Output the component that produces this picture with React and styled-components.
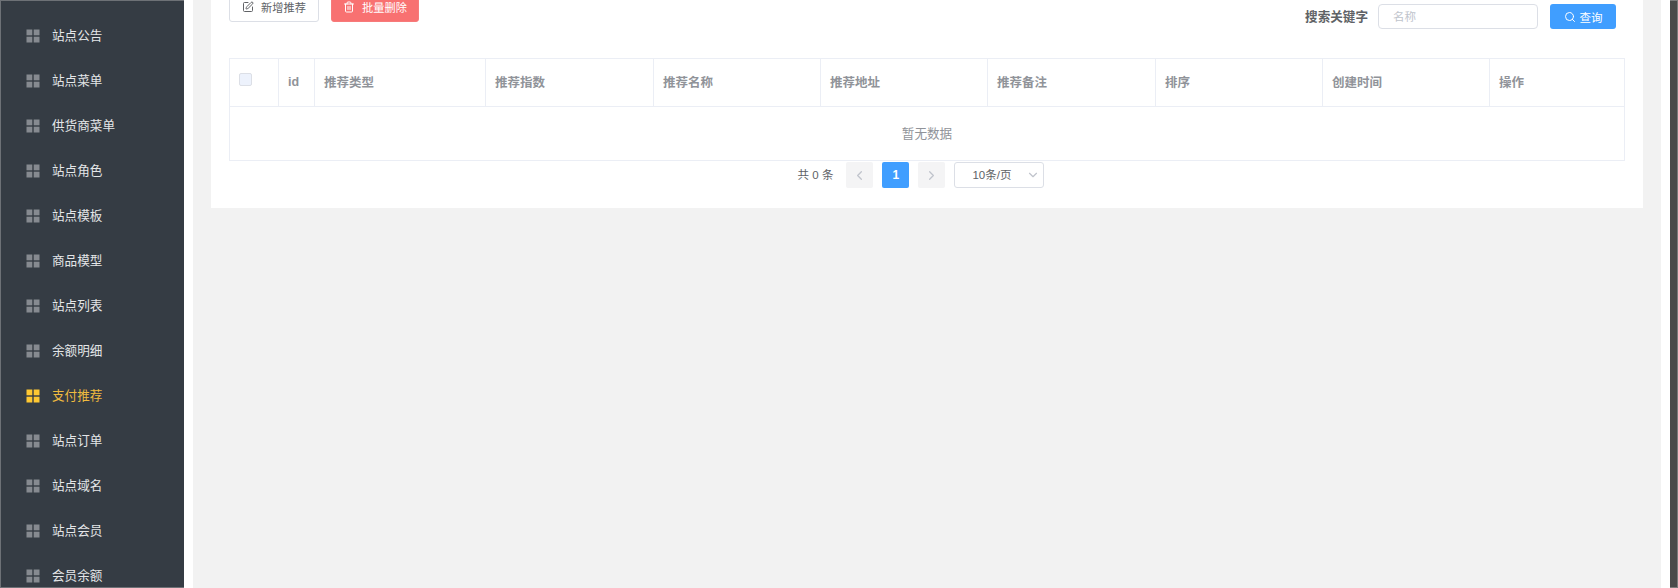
import React from "react";
import styled, { createGlobalStyle } from "styled-components";
import { SquarePen, Trash2, Search, ChevronLeft, ChevronRight, ChevronDown } from "lucide-react";

const Global = createGlobalStyle`
  html, body { margin: 0; padding: 0; height: 100%; overflow: hidden; background: #fff; }
  body { font-family: "Liberation Sans", "Noto Sans CJK SC", sans-serif; font-size: 13px; }
  * { box-sizing: border-box; }
`;

const Shell = styled.div`
  display: flex;
  width: 1678px;
  height: 588px;
  overflow: hidden;
`;

const Sidebar = styled.nav`
  flex: 0 0 184px;
  height: 588px;
  background: #353c44;
  border: 1px solid #6d7176;
  border-right: 0;
  padding-top: 12px;
  overflow: hidden;
`;

const MenuItem = styled.div`
  display: flex;
  align-items: center;
  height: 45px;
  padding-left: 25px;
  gap: 12px;
  font-size: 12.6px;
  color: ${(p) => (p.$active ? "#efbb3f" : "#e4e6e8")};
`;

const MenuLabel = styled.span`
  margin-top: -2px;
`;

const GridGlyph = styled.svg`
  width: 14px;
  height: 14px;
  flex: none;
  fill: ${(p) => (p.$active ? "#ffc832" : "#868a90")};
`;

const Main = styled.main`
  flex: 1;
  min-width: 0;
  background: #fff;
  padding: 0 9px;
`;

const Backdrop = styled.div`
  height: 100%;
  background: #f2f2f2;
  padding: 0 18px;
  overflow: hidden;
`;

const Card = styled.section`
  margin-top: -8px;
  background: #fff;
  padding: 0 18px 20px;
  position: relative;
`;

const Toolbar = styled.div`
  display: flex;
  justify-content: space-between;
  align-items: flex-start;
  height: 66px;
  padding-right: 9px;
`;

const ButtonGroup = styled.div`
  display: flex;
  gap: 12px;
`;

const Button = styled.button`
  display: inline-flex;
  align-items: center;
  justify-content: center;
  gap: 7px;
  width: ${(p) => p.$w}px;
  height: 30px;
  padding: 0;
  border-radius: 3px;
  border: 1px solid ${(p) => (p.$danger ? "#f77a7a" : "#dcdfe6")};
  background: ${(p) => (p.$danger ? "#f87171" : "#fff")};
  color: ${(p) => (p.$danger ? "#fff" : "#606266")};
  font: inherit;
  font-size: 11.2px;
`;

const SearchGroup = styled.div`
  display: flex;
  align-items: center;
  margin-top: 12px;
  height: 25px;
`;

const SearchLabel = styled.label`
  font-size: 12.6px;
  font-weight: 700;
  color: #606266;
  margin-right: 10px;
  margin-top: -2px;
`;

const SearchInput = styled.input`
  width: 160px;
  height: 25px;
  border: 1px solid #dcdfe6;
  border-radius: 4px;
  padding: 0 14px;
  font: inherit;
  font-size: 11.5px;
  margin-right: 12px;
  outline: none;
  &::placeholder { color: #c0c4cc; opacity: 1; }
`;

const QueryButton = styled.button`
  display: inline-flex;
  align-items: center;
  justify-content: center;
  gap: 4px;
  width: 66px;
  height: 25px;
  padding: 0;
  border: 0;
  border-radius: 3px;
  background: #409eff;
  color: #fff;
  font: inherit;
  font-size: 11.5px;
`;

const Table = styled.table`
  width: 1395px;
  border-collapse: collapse;
  table-layout: fixed;
  border: 1px solid #ebeef5;
`;

const Th = styled.th`
  height: 48px;
  padding: 0 9px 2px;
  text-align: left;
  font-size: 12.5px;
  font-weight: 700;
  color: #909399;
  border: 1px solid #ebeef5;
`;

const EmptyCell = styled.td`
  height: 54px;
  padding-bottom: 4px;
  text-align: center;
  font-size: 12.6px;
  color: #909399;
  border: 1px solid #ebeef5;
`;

const Check = styled.span`
  display: block;
  width: 13px;
  height: 13px;
  margin-top: -4px;
  background: #edf2fc;
  border: 1px solid #dcdfe6;
  border-radius: 2px;
`;

const Pagination = styled.div`
  display: flex;
  align-items: center;
  justify-content: center;
  height: 26px;
  margin-top: 1px;
  padding-right: 12px;
  font-size: 11.5px;
  color: #606266;
`;

const Total = styled.span`
  margin-right: 13px;
  margin-top: -3px;
`;

const PageBox = styled.span`
  display: inline-flex;
  align-items: center;
  justify-content: center;
  width: 27px;
  height: 26px;
  margin-right: 9px;
  border-radius: 2px;
  background: ${(p) => (p.$current ? "#409eff" : "#f4f4f5")};
  color: ${(p) => (p.$current ? "#fff" : "#c0c4cc")};
  font-weight: 700;
  font-size: 12px;
`;

const SizeSelect = styled.span`
  position: relative;
  display: inline-flex;
  align-items: center;
  width: 90px;
  height: 26px;
  padding: 0 0 3px 17px;
  border: 1px solid #dcdfe6;
  border-radius: 3px;
  color: #606266;
  font-size: 11.5px;
  & svg {
    position: absolute;
    top: 5px;
    right: 3px;
    color: #c0c4cc;
  }
`;

const Scrollbar = styled.div`
  flex: 0 0 8px;
  height: 588px;
  background: #4a4a4a;
  border: 1px solid #7b7b7b;
  border-left: 0;
`;

const menu = ["站点公告", "站点菜单", "供货商菜单", "站点角色", "站点模板", "商品模型", "站点列表", "余额明细", "支付推荐", "站点订单", "站点域名", "站点会员", "会员余额"];

const columns = [
  { label: "", width: 49, check: true },
  { label: "id", width: 36 },
  { label: "推荐类型", width: 171 },
  { label: "推荐指数", width: 168 },
  { label: "推荐名称", width: 167 },
  { label: "推荐地址", width: 167 },
  { label: "推荐备注", width: 168 },
  { label: "排序", width: 167 },
  { label: "创建时间", width: 167 },
  { label: "操作", width: 135 },
];

const Glyph = ({ active }) => (
  <GridGlyph viewBox="0 0 14 14" $active={active}>
    <rect x="0.5" y="0.5" width="5.8" height="5.8" />
    <rect x="7.7" y="0.5" width="5.8" height="5.8" />
    <rect x="0.5" y="7.7" width="5.8" height="5.8" />
    <rect x="7.7" y="7.7" width="5.8" height="5.8" />
  </GridGlyph>
);

export default function App() {
  return (
    <>
      <Global />
      <Shell>
        <Sidebar>
          {menu.map((m) => (
            <MenuItem key={m} $active={m === "支付推荐"}>
              <Glyph active={m === "支付推荐"} />
              <MenuLabel>{m}</MenuLabel>
            </MenuItem>
          ))}
        </Sidebar>
        <Main>
          <Backdrop>
            <Card>
              <Toolbar>
                <ButtonGroup>
                  <Button $w={90}><SquarePen size={12} />新增推荐</Button>
                  <Button $w={88} $danger><Trash2 size={12} />批量删除</Button>
                </ButtonGroup>
                <SearchGroup>
                  <SearchLabel>搜索关键字</SearchLabel>
                  <SearchInput placeholder="名称" readOnly />
                  <QueryButton><Search size={12} />查询</QueryButton>
                </SearchGroup>
              </Toolbar>
              <Table>
                <colgroup>
                  {columns.map((c, i) => <col key={i} width={c.width} />)}
                </colgroup>
                <thead>
                  <tr>
                    {columns.map((c, i) => (
                      <Th key={i}>{c.check ? <Check /> : c.label}</Th>
                    ))}
                  </tr>
                </thead>
                <tbody>
                  <tr>
                    <EmptyCell colSpan={columns.length}>暂无数据</EmptyCell>
                  </tr>
                </tbody>
              </Table>
              <Pagination>
                <Total>共 0 条</Total>
                <PageBox><ChevronLeft size={15} /></PageBox>
                <PageBox $current>1</PageBox>
                <PageBox><ChevronRight size={15} /></PageBox>
                <SizeSelect>10条/页<ChevronDown size={14} /></SizeSelect>
              </Pagination>
            </Card>
          </Backdrop>
        </Main>
        <Scrollbar />
      </Shell>
    </>
  );
}
